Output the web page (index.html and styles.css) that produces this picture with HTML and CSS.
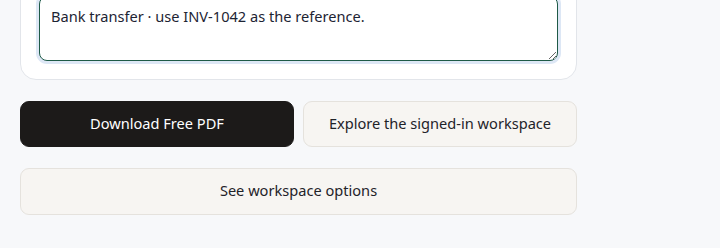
FILE: index.html
```html
<!DOCTYPE html>
<html lang="en">
<head>
<meta charset="utf-8">
<title>Payment note</title>
<link rel="stylesheet" href="styles.css">
</head>
<body>
<main class="page">
  <section class="card">
    <textarea class="note" aria-label="Payment note">Bank transfer · use INV-1042 as the reference.</textarea>
  </section>
  <div class="actions">
    <button class="btn btn-primary" type="button">Download Free PDF</button>
    <button class="btn btn-secondary" type="button">Explore the signed-in workspace</button>
  </div>
  <button class="btn btn-secondary btn-wide" type="button">See workspace options</button>
</main>
</body>
</html>
```
FILE: styles.css
```css
* { box-sizing: border-box; }
html, body { margin: 0; padding: 0; }
body {
  background: #f7f8fa;
  font-family: "Noto Sans", "Open Sans", sans-serif;
  color: #1f2329;
  width: 720px;
  height: 248px;
  overflow: hidden;
}
.page {
  width: 557px;
  margin-left: 20px;
  display: flex;
  flex-direction: column;
}
.card {
  margin-top: -23px;
  background: #ffffff;
  border: 1px solid #e2e5ea;
  border-radius: 16px;
  padding: 18px;
}
.note {
  display: block;
  width: 100%;
  height: 65px;
  margin: 0;
  padding: 9px 11px 10px;
  border: 1px solid #1e5a47;
  border-radius: 8px;
  box-shadow: 0 0 0 3px #dde7f5;
  font-family: inherit;
  font-size: 14.6px;
  line-height: 21px;
  color: #1d2433;
  background: #fff;
  outline: none;
  resize: vertical;
}
.actions {
  margin-top: 21px;
  display: grid;
  grid-template-columns: 1fr 1fr;
  gap: 9px;
}
.btn {
  height: 46px;
  padding: 0 8px 3px;
  border-radius: 9px;
  font-family: inherit;
  font-size: 14.6px;
  cursor: pointer;
}
.btn-primary {
  background: #1c1a19;
  border: 1px solid #1c1a19;
  color: #ffffff;
}
.btn-secondary {
  background: #f7f5f2;
  border: 1px solid #e5e2dd;
  color: #1f2329;
}
.btn-wide {
  margin-top: 21px;
  width: 100%;
  height: 47px;
}
```
